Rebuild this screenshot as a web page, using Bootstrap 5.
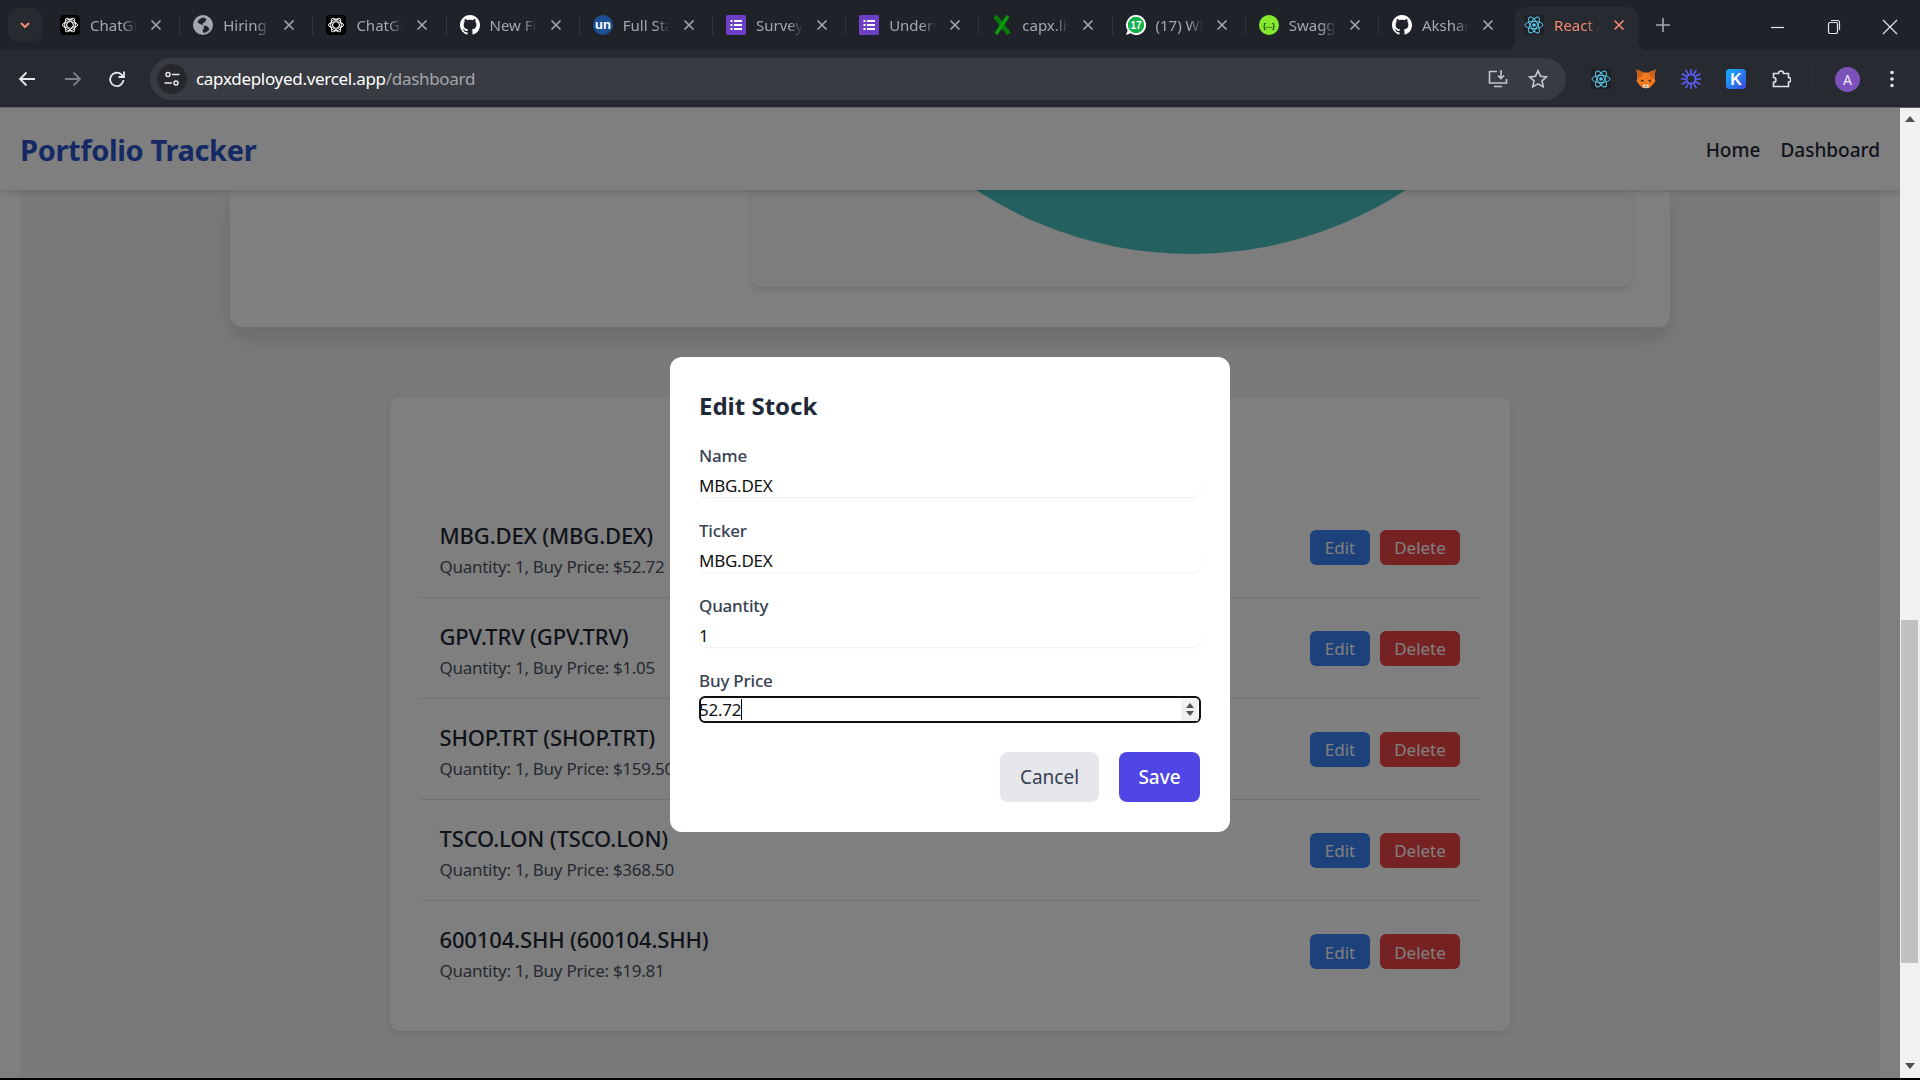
<!DOCTYPE html>
<html lang="en">
<head>
  <meta charset="UTF-8" />
  <meta name="viewport" content="width=device-width, initial-scale=1.0"/>
  <title>Portfolio Tracker</title>
  <link href="https://cdn.jsdelivr.net/npm/bootstrap@5.3.2/dist/css/bootstrap.min.css" rel="stylesheet">
  <style>
    body { font-family: "Noto Sans", "Open Sans", sans-serif; background: #000; }

    /* browser chrome */
    .tab-strip { height: 50px; background: #1f2329; flex: none; padding-left: 8px; }
    .tab-menu { width: 34px; height: 34px; border-radius: 10px; background: #272b30; margin-right: 5px; }
    .tab-item { width: 133.2px; height: 43px; margin-top: 7px; padding: 0 0 7px 13px; position: relative; flex: none; }
    .tab-item::after { content: ""; position: absolute; right: 0; top: 9px; height: 19px; width: 1px; background: #33373d; }
    .tab-item.no-sep::after { display: none; }
    .tab-favicon { width: 20px; height: 20px; flex: none; }
    .tab-title { width: 47px; margin-left: 10px; font-size: 15px; color: #a4a8ad; white-space: nowrap; overflow: hidden;
      -webkit-mask-image: linear-gradient(to right, #000 70%, transparent 100%); mask-image: linear-gradient(to right, #000 70%, transparent 100%); }
    .tab-x { width: 12px; height: 12px; margin-left: 13px; flex: none; color: #a4a8ad; }
    .tab-active { background: #272a30; border-radius: 10px 10px 0 0; margin-left: 3px; width: 123px; padding-left: 9px; }
    .tab-active::before, .tab-active::after { content: ""; position: absolute; bottom: 0; top: auto; right: auto; width: 10px; height: 10px; background: radial-gradient(circle at 0 0, transparent 10px, #272a30 10.5px); }
    .tab-active::before { left: -10px; }
    .tab-active::after { left: 100%; background: radial-gradient(circle at 100% 0, transparent 10px, #272a30 10.5px); }
    .tab-active .tab-title, .tab-active .tab-x { color: #f28b72; }
    .tab-active .tab-title { width: 46px; }
    .tab-plus { width: 16px; height: 16px; margin: 0 0 0 17px; color: #a4a8ad; }
    .win-group { margin-right: 2px; }
    .win-btn { width: 56px; color: #e4e6e8; }
    .win-btn svg { width: 18px; height: 18px; }

    .tool-strip { height: 58px; background: #272a30; border-bottom: 1px solid #5d5f62; flex: none; padding: 1px 0 0 17px; }
    .tool-btn { width: 20px; height: 20px; color: #e6e8ea; flex: none; }
    .tool-fwd { color: #7c7f83; margin: 0 24px 0 26px; }
    .tool-star { margin-left: 20px; }
    .url-box { width: 1416px; height: 42px; margin-left: 23px; border-radius: 21px; background: #383b41; padding: 0 18px 0 7px; flex: none; }
    .url-site { width: 30px; height: 30px; border-radius: 50%; background: #26282c; color: #e6e8ea; flex: none; }
    .url-site svg { width: 18px; height: 18px; }
    .url-text { margin-left: 9px; font-size: 17px; letter-spacing: -.3px; color: #fff; }
    .url-path { color: #a4a8ad; }
    .ext-icon { width: 20px; height: 20px; flex: none; margin-left: 25px; }
    .tool-sep { width: 1px; height: 22px; margin-left: 21px; background: #33373d; }
    .avatar-dot { width: 25px; height: 25px; margin: 0 22px; border-radius: 50%; background: #7b52ba; color: #f0eaf8; font-size: 14px; flex: none; }

    /* page */
    .page-frame { min-height: 0; }
    .page-view { background: #fff; }
    .top-nav { height: 82px; padding: 2px 20px 0 20px; background: #fff; box-shadow: 0 2px 6px rgba(0,0,0,.16); position: relative; z-index: 5; }
    .top-nav .navbar-brand { padding: 0; margin: 0; font-size: 29px; font-weight: 700; color: #2a55c9; letter-spacing: -.35px; }
    .top-nav .nav-link { padding: 0; margin-left: 20px; font-size: 19px; font-weight: 500; color: #1f2937; }
    .dash-main { margin: 0 20px; height: 888px; background: #f3f4f6; padding: 0 210px; }
    .chart-panel { height: 137px; border: 0; border-radius: 0 0 12px 12px; background: #fff; box-shadow: 0 12px 20px rgba(0,0,0,.12); padding: 0 39px 40px 0; }
    .chart-inner { width: 880px; height: 97px; border: 0; border-radius: 0 0 10px 10px; background: #f8faf8; box-shadow: 0 3px 6px rgba(0,0,0,.12); overflow: hidden; }
    .chart-inner svg { width: 880px; height: 97px; display: block; }
    .stock-panel { width: 1120px; margin: 70px auto 0; height: 634px; border: 0; border-radius: 10px; background: #fff; padding: 100px 30px 30px; box-shadow: 0 3px 8px rgba(0,0,0,.1); }
    .stock-row { height: 101px; padding: 0 20px; background: transparent; border-color: #e2e4e8; }
    .stock-name { font-size: 22px; font-weight: 500; color: #1f2937; line-height: 31px; margin: 4px 0 0 -.5px; letter-spacing: -.15px; }
    .stock-meta { font-size: 17px; color: #4b5563; line-height: 25px; margin: 3px 0 0 -.5px; letter-spacing: -.27px; }
    .stock-actions { gap: 10px; }
    .stock-btn { height: 35px; padding: 2px 0 0; font-size: 17px; color: #fff; border: 0; border-radius: 6px; }
    .stock-edit { width: 60px; background: #3b82f6; }
    .stock-del { width: 80px; background: #ef4444; }

    /* dialog */
    .modal-backdrop.page-dim { position: absolute; width: 100%; height: 100%; z-index: 10; }
    .dialog-wrap { z-index: 20; }
    .edit-dialog { width: 560px; height: 475px; margin-top: 3px; padding: 30px; border: 0; border-radius: 12px; background: #fff; }
    .edit-title { font-size: 24px; font-weight: 700; color: #1f2937; line-height: 35px; margin: 1px 0 19px -1px; }
    .edit-label { display: block; padding-top: 1px; font-size: 17px; font-weight: 500; color: #374151; line-height: 25px; margin: 0 0 7px -1px; letter-spacing: -.2px; }
    .edit-field { height: 22px; padding: 0 0 1px; border: 0; border-radius: 6px; font-size: 17px; line-height: 21px; letter-spacing: -.25px; text-indent: -1px; color: #111; box-shadow: 0 1px 2px rgba(0,0,0,.07); margin-bottom: 20px; }
    .edit-field::-webkit-inner-spin-button { -webkit-appearance: none; appearance: none; }
    .edit-focus { position: relative; margin: -4px -1px 0; }
    .edit-focus .edit-field { height: 27px; padding: 0; border: 2.5px solid #101010; box-shadow: none; margin: 0; text-indent: -2px; }
    .edit-caret { position: absolute; left: 42px; top: 3px; width: 1px; height: 21px; background: #000; }
    .edit-spin { position: absolute; right: 3px; top: 2.5px; bottom: 2.5px; width: 17px; background: #f0f0f0; gap: 3px; }
    .spin-up, .spin-down { width: 0; height: 0; border-left: 4.500px solid transparent; border-right: 4.500px solid transparent; }
    .spin-up { border-bottom: 5px solid #505050; }
    .spin-down { border-top: 5px solid #505050; }
    .edit-actions { margin-top: 29px; gap: 20px; }
    .dlg-btn { height: 50px; padding: 0; font-size: 19px; border: 0; border-radius: 8px; }
    .dlg-cancel { width: 99px; background: #e5e7eb; color: #374151; }
    .dlg-save { width: 81px; background: #4f46e5; color: #fff; font-weight: 500; }

    /* scrollbar + bottom edge */
    .scroll-rail { width: 20px; flex: none; background: #f1f1f1; padding-top: 8px; }
    .rail-up, .rail-down { width: 0; height: 0; margin: 0 auto; border-left: 5px solid transparent; border-right: 5px solid transparent; }
    .rail-up { border-bottom: 6px solid #505050; }
    .rail-down { border-top: 6px solid #505050; margin-top: 100px; }
    .rail-thumb { width: 17px; height: 343px; margin: 498px 0 0 1px; background: #c1c1c1; }
    .bottom-edge { height: 2px; flex: none; background: #000; }
  </style>
</head>
<body class="d-flex flex-column vh-100 overflow-hidden">

<svg width="0" height="0" class="position-absolute">
  <defs>
    <linearGradient id="kGrad" x1="0" y1="0" x2="1" y2="1"><stop offset="0" stop-color="#10b4ff"/><stop offset="1" stop-color="#3f47e0"/></linearGradient>
    <symbol id="ic-openai" viewBox="0 0 20 20">
      <rect width="20" height="20" rx="4" fill="#000"/>
      <g fill="none" stroke="#e8e8e8" stroke-width="1">
        <ellipse cx="10" cy="10" rx="7.6" ry="3.200"/>
        <ellipse cx="10" cy="10" rx="7.6" ry="3.200" transform="rotate(60 10 10)"/>
        <ellipse cx="10" cy="10" rx="7.6" ry="3.200" transform="rotate(120 10 10)"/>
        <circle cx="10" cy="10" r="5.800"/>
      </g>
    </symbol>
    <symbol id="ic-globe" viewBox="0 0 20 20">
      <circle cx="10" cy="10" r="10" fill="#a4a8ad"/>
      <path d="M11 2.500c-3 .5-6 2-6.500 5l3.500 2 2.500.5.500 3-1.500 2.500 1 2.500c3-.5 5-2 6-4l-2.500-3-3.500-.5-1-2 2.500-1.500 1.500-2.500z" fill="#1f2329"/>
    </symbol>
    <symbol id="ic-github" viewBox="0 0 16 16">
      <path fill="#fff" d="M8 0C3.58 0 0 3.58 0 8c0 3.54 2.29 6.53 5.47 7.59.4.07.55-.17.55-.38 0-.19-.01-.82-.01-1.49-2.01.37-2.53-.49-2.69-.94-.09-.23-.48-.94-.82-1.13-.28-.15-.68-.52-.01-.53.63-.01 1.08.58 1.23.82.72 1.21 1.87.87 2.33.66.07-.52.28-.87.51-1.07-1.78-.2-3.64-.89-3.64-3.95 0-.87.31-1.59.82-2.15-.08-.2-.36-1.02.08-2.12 0 0 .67-.21 2.2.82.64-.18 1.32-.27 2-.27.68 0 1.36.09 2 .27 1.53-1.04 2.2-.82 2.2-.82.44 1.1.16 1.92.08 2.12.51.56.82 1.27.82 2.15 0 3.07-1.87 3.75-3.65 3.95.29.25.54.73.54 1.48 0 1.07-.01 1.93-.01 2.2 0 .21.15.46.55.38A8.012 8.012 0 0 0 16 8c0-4.42-3.58-8-8-8z"/>
    </symbol>
    <symbol id="ic-forms" viewBox="0 0 20 20">
      <rect width="20" height="20" rx="1.500" fill="#6c3fc5"/>
      <g fill="#fff"><rect x="4.500" y="5" width="2" height="2"/><rect x="8" y="5" width="8" height="2"/><rect x="4.500" y="9" width="2" height="2"/><rect x="8" y="9" width="8" height="2"/><rect x="4.500" y="13" width="2" height="2"/><rect x="8" y="13" width="8" height="2"/></g>
    </symbol>
    <symbol id="ic-capx" viewBox="0 0 20 20">
      <path d="M3 1l14 18" stroke="#0b7a0b" stroke-width="4.500" fill="none"/>
      <path d="M16 1L4 19" stroke="#0d9b0d" stroke-width="3.500" fill="none"/>
    </symbol>
    <symbol id="ic-react" viewBox="0 0 20 20">
      <rect width="20" height="20" rx="1" fill="#1d2026"/>
      <g fill="none" stroke="#5cc8e8" stroke-width="1">
        <ellipse cx="10" cy="10" rx="9" ry="3.600"/>
        <ellipse cx="10" cy="10" rx="9" ry="3.600" transform="rotate(60 10 10)"/>
        <ellipse cx="10" cy="10" rx="9" ry="3.600" transform="rotate(120 10 10)"/>
      </g>
      <circle cx="10" cy="10" r="1.800" fill="#5cc8e8"/>
    </symbol>
    <symbol id="ic-x" viewBox="0 0 12 12"><path d="M1.500 1.500l9 9M10.500 1.500l-9 9" stroke="currentColor" stroke-width="1.600" fill="none"/></symbol>
    <symbol id="ic-fox" viewBox="0 0 20 20">
      <path d="M.5.500l7 3h5l7-3L18.500 9l1 3-3 4-3 3H6.500l-3-3-3-4 1-3z" fill="#f0791e"/>
      <path d="M.5.500l7 3-3 5-3 .5zM19.500.500l-7 3 3 5 3 .5z" fill="#c9601c"/>
      <path d="M7.500 15l2.500 1 2.500-1 .5 3-3 1.500L7 18z" fill="#e4d5c3"/>
      <path d="M9 17h2l-1 1z" fill="#1f1f1f"/>
      <path d="M5 10.500l3 1-2.500 1.500zM15 10.500l-3 1 2.500 1.500z" fill="#2b2017"/>
    </symbol>
    <symbol id="ic-spark" viewBox="0 0 20 20">
      <g fill="none" stroke="#5a5cf0" stroke-width="1.700" stroke-linecap="round">
        <circle cx="10" cy="10" r="4.600"/>
        <path d="M14.500 10H20M13.900 12.250L18.660 15M12.250 13.900L15 18.660M10 14.500V20M7.750 13.900L5 18.660M6.100 12.250L1.340 15M5.500 10H0M6.100 7.750L1.340 5M7.750 6.100L5 1.340M10 5.500V0M12.250 6.100L15 1.340M13.900 7.750L18.660 5"/>
      </g>
    </symbol>
  </defs>
</svg>

<div class="tab-strip d-flex align-items-center">
  <div class="tab-menu d-flex align-items-center justify-content-center">
    <svg width="12" height="12" viewBox="0 0 12 12"><path d="M2 4l4 4 4-4" fill="none" stroke="#f28b72" stroke-width="2"/></svg>
  </div>
  <div class="tab-item d-flex align-items-center"><svg class="tab-favicon"><use href="#ic-openai"/></svg><span class="tab-title">ChatGPT</span><svg class="tab-x"><use href="#ic-x"/></svg></div>
  <div class="tab-item d-flex align-items-center"><svg class="tab-favicon"><use href="#ic-globe"/></svg><span class="tab-title">Hiring</span><svg class="tab-x"><use href="#ic-x"/></svg></div>
  <div class="tab-item d-flex align-items-center"><svg class="tab-favicon"><use href="#ic-openai"/></svg><span class="tab-title">ChatGPT</span><svg class="tab-x"><use href="#ic-x"/></svg></div>
  <div class="tab-item d-flex align-items-center"><svg class="tab-favicon"><use href="#ic-github"/></svg><span class="tab-title">New File</span><svg class="tab-x"><use href="#ic-x"/></svg></div>
  <div class="tab-item d-flex align-items-center">
    <svg class="tab-favicon" viewBox="0 0 20 20"><circle cx="10" cy="10" r="10" fill="#1c4f8f"/><text x="10" y="14" text-anchor="middle" font-family="Liberation Sans, sans-serif" font-size="13" font-weight="700" fill="#fff">un</text></svg>
    <span class="tab-title">Full Stack</span><svg class="tab-x"><use href="#ic-x"/></svg></div>
  <div class="tab-item d-flex align-items-center"><svg class="tab-favicon"><use href="#ic-forms"/></svg><span class="tab-title">Survey</span><svg class="tab-x"><use href="#ic-x"/></svg></div>
  <div class="tab-item d-flex align-items-center"><svg class="tab-favicon"><use href="#ic-forms"/></svg><span class="tab-title">Understand</span><svg class="tab-x"><use href="#ic-x"/></svg></div>
  <div class="tab-item d-flex align-items-center"><svg class="tab-favicon"><use href="#ic-capx"/></svg><span class="tab-title">capx.live</span><svg class="tab-x"><use href="#ic-x"/></svg></div>
  <div class="tab-item d-flex align-items-center">
    <svg class="tab-favicon" viewBox="0 0 20 20"><path d="M10 0a10 10 0 1 1-5.500 18.300L0 20l1.600-4.700A10 10 0 0 1 10 0z" fill="#fff"/><circle cx="10" cy="10" r="8.200" fill="#12b14c"/><text x="10" y="13.500" text-anchor="middle" font-family="Liberation Sans, sans-serif" font-size="10" font-weight="700" fill="#fff">17</text></svg>
    <span class="tab-title">(17) WhatsApp</span><svg class="tab-x"><use href="#ic-x"/></svg></div>
  <div class="tab-item d-flex align-items-center">
    <svg class="tab-favicon" viewBox="0 0 20 20"><circle cx="10" cy="10" r="10" fill="#85ea2d"/><text x="10" y="12.500" text-anchor="middle" font-family="Liberation Sans, sans-serif" font-size="7.500" font-weight="700" fill="#1c3a1c">{...}</text></svg>
    <span class="tab-title">Swagger</span><svg class="tab-x"><use href="#ic-x"/></svg></div>
  <div class="tab-item no-sep d-flex align-items-center"><svg class="tab-favicon"><use href="#ic-github"/></svg><span class="tab-title">Akshar</span><svg class="tab-x"><use href="#ic-x"/></svg></div>
  <div class="tab-item tab-active d-flex align-items-center"><svg class="tab-favicon"><use href="#ic-react"/></svg><span class="tab-title">React App</span><svg class="tab-x"><use href="#ic-x"/></svg></div>
  <svg class="tab-plus" viewBox="0 0 16 16"><path d="M8 1v14M1 8h14" stroke="currentColor" stroke-width="1.600"/></svg>
  <div class="win-group ms-auto d-flex align-items-center">
    <div class="win-btn text-center"><svg viewBox="0 0 18 18"><path d="M2 9.500h13" stroke="currentColor" stroke-width="1.200"/></svg></div>
    <div class="win-btn text-center"><svg viewBox="0 0 18 18" fill="none" stroke="currentColor" stroke-width="1.200"><rect x="3.500" y="4.500" width="9" height="11" rx="1.500"/><path d="M6 2.500h6.500a2 2 0 0 1 2 2V12"/></svg></div>
    <div class="win-btn text-center"><svg viewBox="0 0 18 18"><path d="M2 2l14 14M16 2L2 16" stroke="currentColor" stroke-width="1.200"/></svg></div>
  </div>
</div>

<div class="tool-strip d-flex align-items-center">
  <svg class="tool-btn" viewBox="0 0 20 20" fill="none" stroke="currentColor" stroke-width="1.800"><path d="M18 10H3M9.500 3.500L3 10l6.500 6.500"/></svg>
  <svg class="tool-btn tool-fwd" viewBox="0 0 20 20" fill="none" stroke="currentColor" stroke-width="1.800"><path d="M2 10h15M10.500 3.500L17 10l-6.500 6.500"/></svg>
  <svg class="tool-btn" viewBox="0 0 20 20" fill="none" stroke="currentColor" stroke-width="1.800"><path d="M16.500 11a6.700 6.700 0 1 1-2-5.400L17 8M17 2.500V8h-5.500"/></svg>
  <div class="url-box d-flex align-items-center">
    <div class="url-site d-flex align-items-center justify-content-center">
      <svg viewBox="0 0 18 18" fill="none" stroke="currentColor" stroke-width="1.500"><circle cx="5" cy="4.500" r="2"/><path d="M9 4.500h7.500M1.500 13H9"/><circle cx="13" cy="13" r="2"/></svg>
    </div>
    <span class="url-text">capxdeployed.vercel.app<span class="url-path">/dashboard</span></span>
    <svg class="tool-btn ms-auto" viewBox="0 0 20 20" fill="none" stroke="#c4c7ca" stroke-width="1.600"><path d="M9 2.500H1.500v11.500h17V10M6 17.500h8M13 1v8M10 6.500L13 9.500l3-3"/></svg>
    <svg class="tool-btn tool-star" viewBox="0 0 20 20" fill="none" stroke="#c4c7ca" stroke-width="1.600"><path d="M10 1.800l2.500 5.400 5.900.7-4.400 4 1.200 5.800-5.200-2.900-5.200 2.900 1.200-5.800-4.400-4 5.900-.7z"/></svg>
  </div>
  <svg class="ext-icon"><use href="#ic-react"/></svg>
  <svg class="ext-icon"><use href="#ic-fox"/></svg>
  <svg class="ext-icon"><use href="#ic-spark"/></svg>
  <svg class="ext-icon" viewBox="0 0 20 20"><rect width="20" height="20" rx="3.500" fill="url(#kGrad)"/><text x="10" y="15.500" text-anchor="middle" font-family="Liberation Sans, sans-serif" font-size="16" font-weight="700" fill="#fff">K</text></svg>
  <svg class="ext-icon" viewBox="0 0 20 20" fill="none" stroke="#dfe1e3" stroke-width="1.600"><path d="M2.500 4.500h5a2.500 2.500 0 0 1 5 0h5v4a2.300 2.300 0 0 1 0 4.600v4.400h-15v-4.200a2.400 2.400 0 0 0 0-4.800z"/></svg>
  <div class="tool-sep"></div>
  <div class="avatar-dot d-flex align-items-center justify-content-center">A</div>
  <svg class="tool-btn" viewBox="0 0 20 20" fill="#e6e8ea"><circle cx="10" cy="3.500" r="1.800"/><circle cx="10" cy="10" r="1.800"/><circle cx="10" cy="16.500" r="1.800"/></svg>
</div>

<div class="page-frame d-flex flex-grow-1">
  <div class="page-view position-relative flex-grow-1 overflow-hidden">
    <nav class="navbar top-nav">
      <a class="navbar-brand" href="#">Portfolio Tracker</a>
      <div class="d-flex">
        <a class="nav-link" href="#">Home</a>
        <a class="nav-link" href="#">Dashboard</a>
      </div>
    </nav>

    <main class="dash-main">
      <div class="card chart-panel d-flex flex-row justify-content-end">
        <div class="card chart-inner">
          <svg viewBox="0 0 880 97"><circle cx="440" cy="-329" r="393" fill="#4bc0c0"/></svg>
        </div>
      </div>

      <div class="card stock-panel">
        <ul class="list-group list-group-flush">
          <li class="list-group-item stock-row d-flex align-items-center justify-content-between">
            <div><div class="stock-name">MBG.DEX (MBG.DEX)</div><div class="stock-meta">Quantity: 1, Buy Price: $52.72</div></div>
            <div class="d-flex stock-actions"><button class="btn stock-btn stock-edit">Edit</button><button class="btn stock-btn stock-del">Delete</button></div>
          </li>
          <li class="list-group-item stock-row d-flex align-items-center justify-content-between">
            <div><div class="stock-name">GPV.TRV (GPV.TRV)</div><div class="stock-meta">Quantity: 1, Buy Price: $1.05</div></div>
            <div class="d-flex stock-actions"><button class="btn stock-btn stock-edit">Edit</button><button class="btn stock-btn stock-del">Delete</button></div>
          </li>
          <li class="list-group-item stock-row d-flex align-items-center justify-content-between">
            <div><div class="stock-name">SHOP.TRT (SHOP.TRT)</div><div class="stock-meta">Quantity: 1, Buy Price: $159.50</div></div>
            <div class="d-flex stock-actions"><button class="btn stock-btn stock-edit">Edit</button><button class="btn stock-btn stock-del">Delete</button></div>
          </li>
          <li class="list-group-item stock-row d-flex align-items-center justify-content-between">
            <div><div class="stock-name">TSCO.LON (TSCO.LON)</div><div class="stock-meta">Quantity: 1, Buy Price: $368.50</div></div>
            <div class="d-flex stock-actions"><button class="btn stock-btn stock-edit">Edit</button><button class="btn stock-btn stock-del">Delete</button></div>
          </li>
          <li class="list-group-item stock-row d-flex align-items-center justify-content-between">
            <div><div class="stock-name">600104.SHH (600104.SHH)</div><div class="stock-meta">Quantity: 1, Buy Price: $19.81</div></div>
            <div class="d-flex stock-actions"><button class="btn stock-btn stock-edit">Edit</button><button class="btn stock-btn stock-del">Delete</button></div>
          </li>
        </ul>
      </div>
    </main>

    <div class="modal-backdrop page-dim show top-0 start-0"></div>
    <div class="dialog-wrap position-absolute top-0 start-0 w-100 h-100 d-flex align-items-center justify-content-center">
      <div class="card edit-dialog">
        <h2 class="edit-title">Edit Stock</h2>
        <label class="edit-label">Name</label>
        <input class="form-control edit-field" type="text" value="MBG.DEX">
        <label class="edit-label">Ticker</label>
        <input class="form-control edit-field" type="text" value="MBG.DEX">
        <label class="edit-label">Quantity</label>
        <input class="form-control edit-field" type="number" value="1">
        <label class="edit-label">Buy Price</label>
        <div class="edit-focus">
          <input class="form-control edit-field" type="number" value="52.72">
          <span class="edit-caret"></span>
          <span class="edit-spin d-flex flex-column align-items-center justify-content-center"><span class="spin-up"></span><span class="spin-down"></span></span>
        </div>
        <div class="edit-actions d-flex justify-content-end">
          <button class="btn dlg-btn dlg-cancel">Cancel</button>
          <button class="btn dlg-btn dlg-save">Save</button>
        </div>
      </div>
    </div>
  </div>
  <div class="scroll-rail d-flex flex-column">
    <div class="rail-up"></div>
    <div class="rail-thumb"></div>
    <div class="rail-down"></div>
  </div>
</div>
<div class="bottom-edge"></div>

</body>
</html>
